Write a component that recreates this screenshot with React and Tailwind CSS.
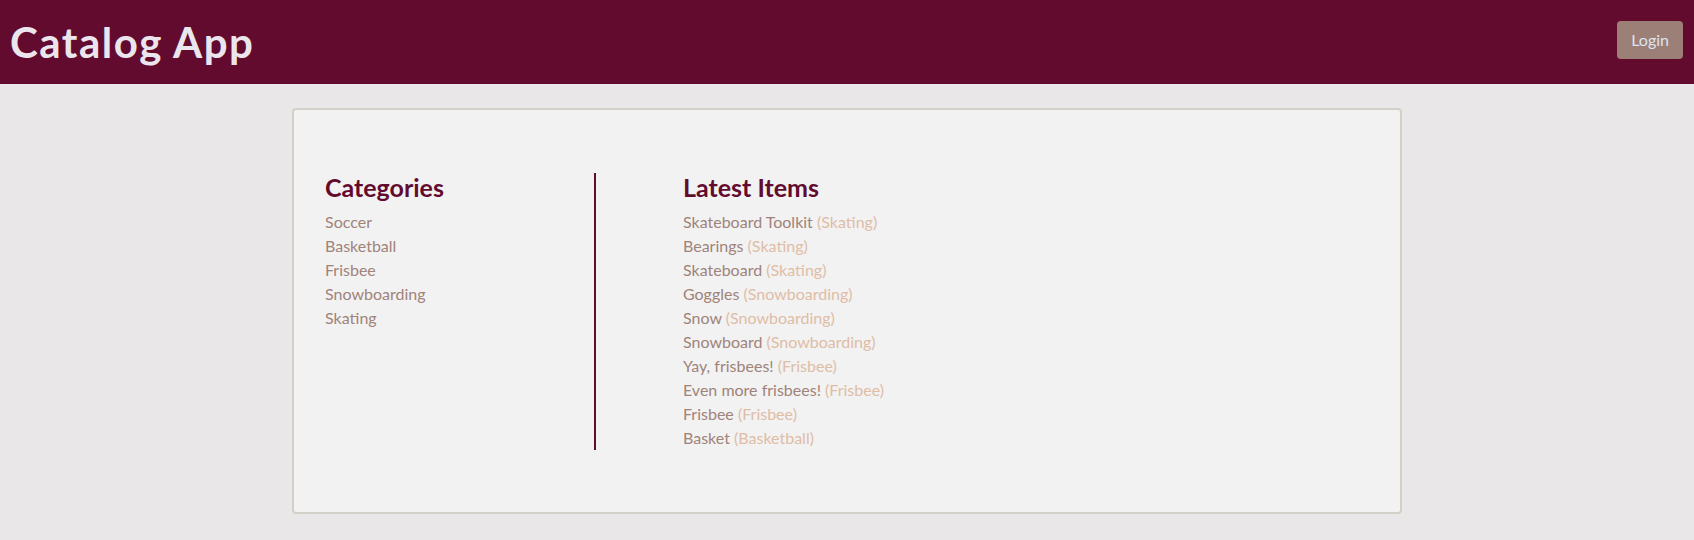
import React from "react";

const categories = ["Soccer", "Basketball", "Frisbee", "Snowboarding", "Skating"];
const items = [
  ["Skateboard Toolkit", "Skating"],
  ["Bearings", "Skating"],
  ["Skateboard", "Skating"],
  ["Goggles", "Snowboarding"],
  ["Snow", "Snowboarding"],
  ["Snowboard", "Snowboarding"],
  ["Yay, frisbees!", "Frisbee"],
  ["Even more frisbees!", "Frisbee"],
  ["Frisbee", "Frisbee"],
  ["Basket", "Basketball"],
];

export default function App() {
  return (
    <div className="min-h-[540px] bg-[#e9e7e8] font-['Segoe_UI','Lato',sans-serif]">
      <header className="h-[84px] bg-[#630b2f] flex items-center justify-between pl-[10px] pr-[11px]">
        <h1 className="text-[42px] leading-[48px] tracking-[1.5px] font-bold text-[#ebe6ee]">Catalog App</h1>
        <button className="self-start mt-[21px] h-[38px] px-[14px] rounded-[4px] bg-[#9c8078] text-[#dfe3ef] text-base leading-6">
          Login
        </button>
      </header>
      <main className="w-[1110px] mx-auto mt-[24px]">
        <div className="border-2 border-[#d3d1c7] bg-[#f2f2f2] rounded-[4px] pt-[63px] pb-[62px] pl-[31px] flex">
          <div className="w-[271px] border-r-2 border-[#630b2f]">
            <h3 className="text-[25px] leading-[28.8px] font-bold text-[#630b2f] mb-2">Categories</h3>
            <ul>
              {categories.map((c) => (
                <li key={c} className="text-base leading-6 text-[#a0837a]">{c}</li>
              ))}
            </ul>
          </div>
          <div className="pl-[87px]">
            <h3 className="text-[25px] leading-[28.8px] font-bold text-[#630b2f] mb-2">Latest Items</h3>
            <ul>
              {items.map(([n, c]) => (
                <li key={n} className="text-base leading-6 text-[#a0837a]">
                  {n} <span className="text-[#dfbda6]">({c})</span>
                </li>
              ))}
            </ul>
          </div>
        </div>
      </main>
    </div>
  );
}
